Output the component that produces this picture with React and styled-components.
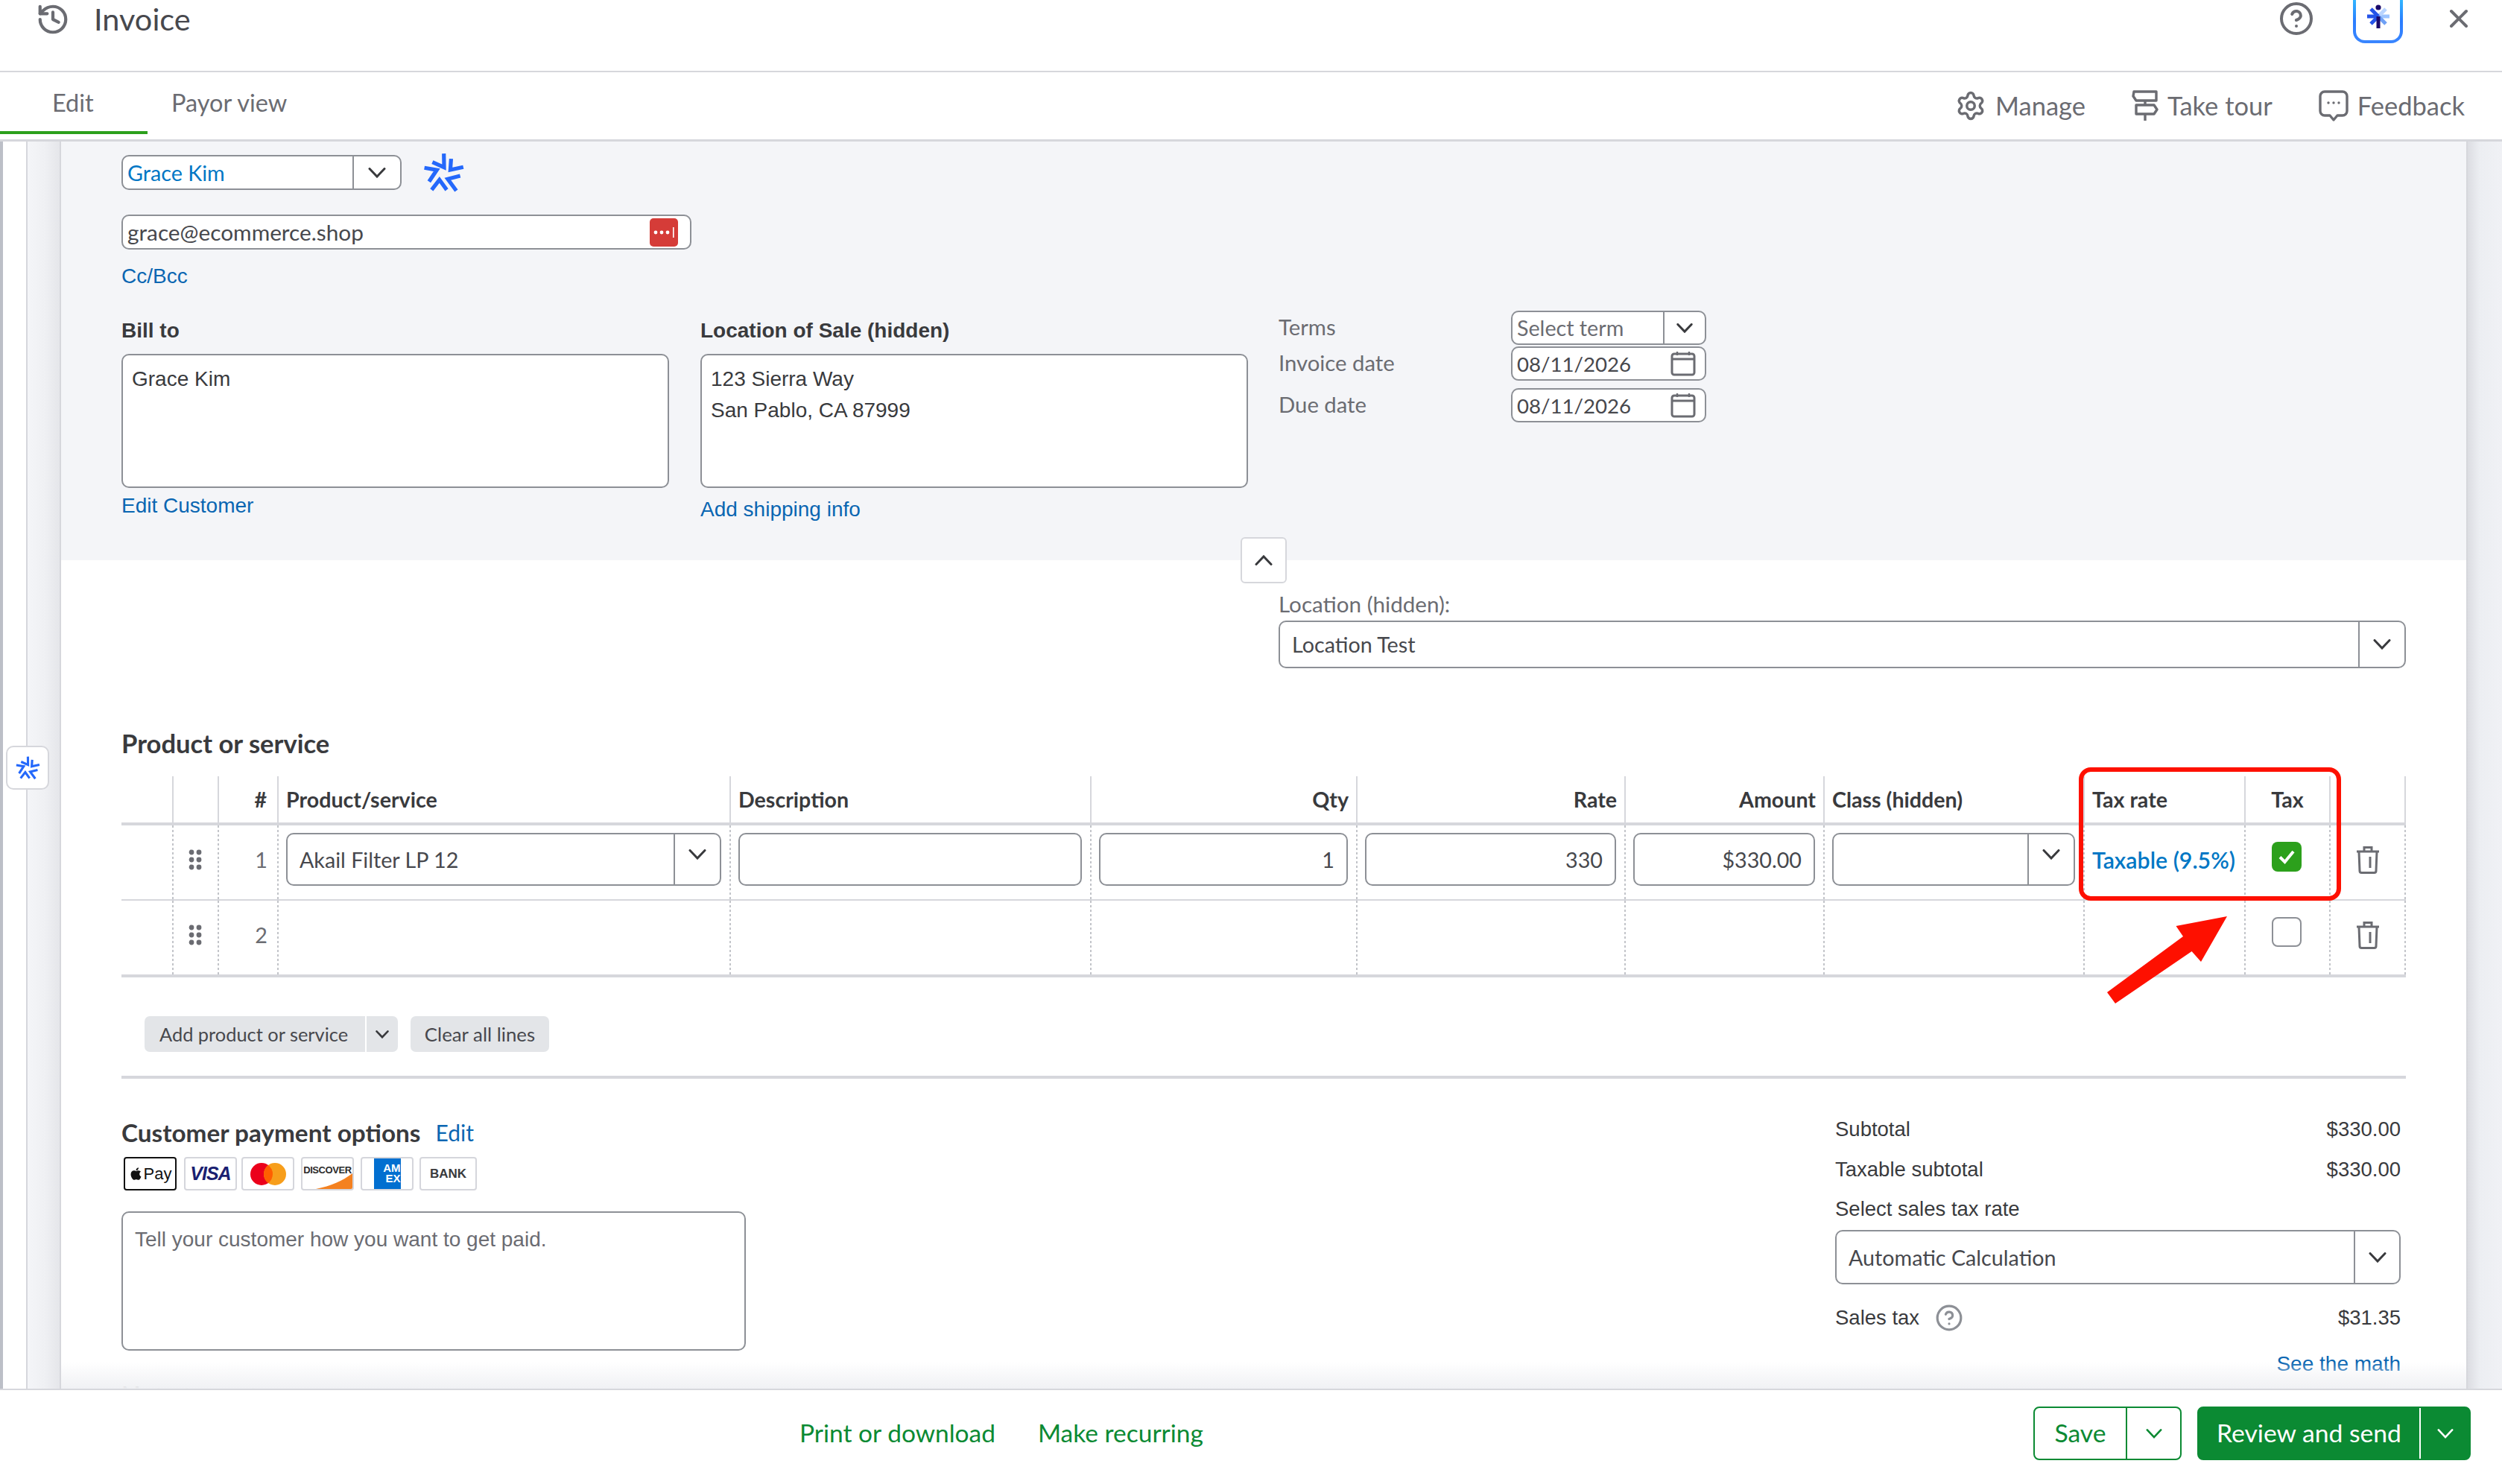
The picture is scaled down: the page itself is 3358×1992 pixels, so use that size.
import React from "react";
import styled, { createGlobalStyle } from "styled-components";
import { FaApple } from "react-icons/fa";
import { History, CircleHelp, X, Settings } from "lucide-react";

const GlobalStyle = createGlobalStyle`
  html, body {
    margin: 0;
    padding: 0;
    background: #fff;
  }
  * {
    box-sizing: border-box;
  }
`;

const LINE = "#d6d7dc";
const BORDER = "#8d9096";
const INK = "#393a3d";
const SOFT = "#47484d";
const MUTED = "#6b6c72";
const LINK = "#0a66b2";
const GREEN = "#0b8a33";
const AVENIR = `Lato, "Noto Sans", sans-serif`;
const ARIAL = `"Liberation Sans", Arial, sans-serif`;
const COLUMNS = "68px 61px 80px 607px 484px 357px 360px 267px 349px 216px 114px 103px";
const DOTS = "repeating-linear-gradient(180deg, #c2c4c9 0 3px, transparent 3px 6px)";

const Page = styled.div`
  width: 3358px;
  height: 1992px;
  display: flex;
  flex-direction: column;
  overflow: hidden;
  font-family: ${AVENIR};
  color: ${INK};
`;

const Header = styled.header`
  height: 97px;
  flex: none;
  display: flex;
  align-items: flex-start;
  border-bottom: 2px solid ${LINE};
  padding: 3px 42px 0 48px;
`;

const HeaderTitle = styled.div`
  font-size: 41.5px;
  line-height: 44px;
  margin-left: 32px;
  color: ${SOFT};
`;

const HeaderIcons = styled.div`
  margin-left: auto;
  display: flex;
  align-items: flex-start;
  padding-top: 2px;
`;

const HelpBtn = styled.div`
  display: flex;
  margin-top: -4px;
  color: ${MUTED};
`;

const AssistBtn = styled.div`
  width: 67px;
  height: 74px;
  margin: -21px 0 0 52px;
  border: 4px solid transparent;
  border-radius: 16px;
  background:
    linear-gradient(#fff, #fff) padding-box,
    linear-gradient(180deg, #35d5ff 0%, #2a7dff 60%, #3a86ff 100%) border-box;
  display: flex;
  align-items: flex-end;
  justify-content: center;
  padding-bottom: 14px;
`;

const CloseBtn = styled.div`
  display: flex;
  margin: 0 -4px 0 55px;
  color: ${MUTED};
`;

const TabBar = styled.nav`
  height: 93px;
  flex: none;
  display: flex;
  align-items: stretch;
  border-bottom: 3px solid ${LINE};
`;

const Tab = styled.div`
  width: ${(p) => p.$w}px;
  font-size: 32.5px;
  line-height: 40px;
  padding: 21px 0 0 ${(p) => p.$pad}px;
  color: ${MUTED};
  height: 83px;
  border-bottom: ${(p) => (p.$active ? `4px solid #2ca01c` : "none")};
`;

const TabActions = styled.div`
  margin-left: auto;
  display: flex;
  padding: 24px 50px 0 0;
  gap: 62px;
`;

const TabAction = styled.div`
  display: flex;
  align-items: flex-start;
  gap: 12px;
  font-size: 34.5px;
  line-height: 42px;
  color: ${MUTED};
`;

const Body = styled.div`
  flex: 1;
  min-height: 0;
  display: flex;
  position: relative;
  overflow: hidden;
`;

const Rail = styled.aside`
  width: 82px;
  flex: none;
  display: flex;
  position: relative;
`;

const RailEdge = styled.div`
  width: 4px;
  background: #bcbfc7;
`;

const RailWhite = styled.div`
  width: 31px;
  background: #fff;
`;

const RailShade = styled.div`
  flex: 1;
  border-left: 2px solid ${LINE};
  border-right: 2px solid ${LINE};
  background: linear-gradient(90deg, #f4f5f8 0%, #eff0f3 55%, #e5e6ea 100%);
`;

const AssistTab = styled.div`
  position: absolute;
  left: 8px;
  top: 811px;
  width: 58px;
  height: 59px;
  background: #fff;
  border: 2px solid ${LINE};
  border-radius: 10px;
  display: flex;
  align-items: center;
  justify-content: center;
`;

const Gutter = styled.div`
  width: 48px;
  flex: none;
  border-left: 2px solid ${LINE};
  background: linear-gradient(90deg, #dcdde2 0%, #eceef2 35%, #f0f1f5 100%);
`;

const Main = styled.main`
  flex: 1;
  min-width: 0;
  display: flex;
  flex-direction: column;
`;

const GraySection = styled.section`
  height: 562px;
  flex: none;
  position: relative;
  background: #f4f5f8;
  padding: 18px 81px 0;
`;

const CollapseBtn = styled.div`
  position: absolute;
  left: 1583px;
  bottom: -31px;
  width: 62px;
  height: 62px;
  background: #fff;
  border: 2px solid ${LINE};
  border-radius: 6px;
  display: flex;
  align-items: center;
  justify-content: center;
`;

const CustomerRow = styled.div`
  display: flex;
  align-items: center;
  height: 47px;
  gap: 9px;
`;

const SparkSvg = styled.svg`
  flex: none;
`;

const Field = styled.div`
  width: ${(p) => (p.$w ? `${p.$w}px` : "100%")};
  height: ${(p) => p.$h}px;
  flex: none;
  display: flex;
  align-items: center;
  background: #fff;
  border: 2px solid ${BORDER};
  border-radius: ${(p) => p.$r || 10}px;
  font-family: ${AVENIR};
  font-size: ${(p) => p.$size || 28.7}px;
  color: ${(p) => p.$color || SOFT};
  margin-top: ${(p) => p.$mt || 0}px;
  padding: 0 ${(p) => p.$padRight || 0}px 0 ${(p) => p.$pad || 0}px;
  justify-content: ${(p) => (p.$right ? "flex-end" : "flex-start")};
`;

const FieldText = styled.div`
  flex: 1;
  white-space: nowrap;
`;

const FieldArrow = styled.div`
  width: ${(p) => p.$w}px;
  height: 100%;
  flex: none;
  border-left: 2px solid ${BORDER};
  display: flex;
  align-items: ${(p) => (p.$top ? "flex-start" : "center")};
  padding-top: ${(p) => (p.$top ? 20 : 0)}px;
  justify-content: center;
`;

const RedBadge = styled.div`
  width: 38px;
  height: 38px;
  margin-right: 16px;
  background: #d53c38;
  border-radius: 5px;
  display: flex;
  align-items: center;
  justify-content: center;
`;

const TextLink = styled.div`
  font-family: ${ARIAL};
  font-size: 28px;
  line-height: 32px;
  color: ${LINK};
  margin-top: ${(p) => p.$mt || 0}px;
`;

const BillingRow = styled.div`
  display: flex;
  margin-top: 30px;
`;

const AddressCol = styled.div`
  width: 735px;
  margin-right: ${(p) => p.$gap}px;
  padding-top: 12px;
`;

const BoldLabel = styled.div`
  font-family: ${ARIAL};
  font-weight: 700;
  font-size: 28px;
  line-height: 30px;
  margin-bottom: 16px;
`;

const AddressBox = styled.div`
  height: 180px;
  background: #fff;
  border: 2px solid ${BORDER};
  border-radius: 10px;
  padding: 11px 12px;
  font-family: ${ARIAL};
  font-size: 28px;
  line-height: 42px;
`;

const TermsGrid = styled.div`
  display: grid;
  grid-template-columns: 312px 262px;
  grid-template-rows: 46px 46px 46px;
  row-gap: 2px;
  align-items: center;
  font-size: 29.3px;
  color: ${MUTED};
  & > span {
    position: relative;
    top: -2px;
  }
  & > :nth-child(n + 5) {
    margin-top: 16px;
  }
`;

const DateIcon = styled.div`
  display: flex;
  margin-left: auto;
  margin-right: 12px;
`;

const FormBody = styled.div`
  padding: 0 81px;
`;

const LocationBlock = styled.div`
  width: 1513px;
  margin: 43px 0 0 1553px;
`;

const LocationLabel = styled.div`
  font-size: 29.6px;
  line-height: 32px;
  margin-bottom: 6px;
  color: ${MUTED};
`;

const SectionTitle = styled.h2`
  margin: ${(p) => p.$mt}px 0 0;
  font-size: ${(p) => p.$size || 34.6}px;
  line-height: 40px;
  font-weight: 700;
  color: ${INK};
`;

const TableWrap = styled.div`
  position: relative;
  margin-top: 24px;
`;

const Row = styled.div`
  display: grid;
  grid-template-columns: ${COLUMNS};
  height: ${(p) => p.$h}px;
  border-bottom: ${(p) => p.$rule}px solid ${LINE};
  box-sizing: content-box;
`;

const HeadCell = styled.div`
  display: flex;
  align-items: center;
  justify-content: ${(p) => p.$align || "flex-start"};
  border-left: ${(p) => (p.$first ? "none" : `2px solid ${LINE}`)};
  border-right: ${(p) => (p.$last ? `2px solid ${LINE}` : "none")};
  padding: 0 ${(p) => p.$padR ?? 10}px 0 10px;
  font-size: 28.6px;
  font-weight: 700;
  white-space: nowrap;
`;

const Cell = styled.div`
  display: flex;
  align-items: ${(p) => (p.$top ? "flex-start" : "center")};
  justify-content: ${(p) => p.$align || "flex-start"};
  background-image: ${(p) => (p.$first ? "none" : p.$last ? `${DOTS}, ${DOTS}` : DOTS)};
  background-size: 2px 100%;
  background-repeat: no-repeat;
  background-position: ${(p) => (p.$last ? "left top, right top" : "left top")};
  padding: ${(p) => (p.$top ? "10px 11px 0 12px" : "0 0 8px")};
  font-size: 28.7px;
  color: ${SOFT};
  white-space: nowrap;
`;

const NumCell = styled(Cell)`
  padding-right: 13px;
  color: ${MUTED};
`;

const TaxableLink = styled.span`
  font-size: 30.3px;
  font-weight: 600;
  color: #0077c5;
  margin-left: 12px;
`;

const CheckBox = styled.div`
  width: 40px;
  height: 40px;
  border-radius: 8px;
  background: ${(p) => (p.$on ? "#2ca01c" : "#fff")};
  border: ${(p) => (p.$on ? "none" : `2px solid ${BORDER}`)};
  display: flex;
  align-items: center;
  justify-content: center;
  margin-bottom: 8px;
`;

const HighlightBox = styled.div`
  position: absolute;
  left: 2627px;
  top: -12px;
  width: 352px;
  height: 179px;
  border: 6px solid #fe1000;
  border-radius: 16px;
  pointer-events: none;
`;

const ArrowMark = styled.svg`
  position: absolute;
  left: 2657px;
  top: 183px;
`;

const LineButtons = styled.div`
  display: flex;
  gap: 17px;
  margin: 52px 0 0 31px;
`;

const GrayBtn = styled.div`
  width: ${(p) => p.$w}px;
  height: 48px;
  display: flex;
  align-items: center;
  justify-content: ${(p) => (p.$center ? "center" : "flex-start")};
  padding-left: ${(p) => (p.$center ? 0 : 20)}px;
  background: #e3e5e8;
  border-radius: 7px;
  font-size: ${(p) => p.$size}px;
  color: ${SOFT};
`;

const GrayDivider = styled.div`
  height: 100%;
  width: 44px;
  margin-left: auto;
  border-left: 2px solid #fff;
  display: flex;
  align-items: center;
  justify-content: center;
`;

const Separator = styled.div`
  height: 4px;
  background: ${LINE};
  margin-top: 32px;
`;

const BottomGrid = styled.div`
  display: flex;
  justify-content: space-between;
  margin-top: 52px;
  padding-right: 7px;
`;

const PaymentCol = styled.div`
  width: 838px;
`;

const PaymentHead = styled.div`
  display: flex;
  gap: 20px;
  align-items: center;
`;

const EditLink = styled.span`
  font-size: 30px;
  color: ${LINK};
`;

const CardRow = styled.div`
  display: flex;
  margin: 13px 0 0 3px;
`;

const Card = styled.div`
  width: ${(p) => p.$w || 71}px;
  height: 45px;
  margin-right: ${(p) => p.$gap}px;
  flex: none;
  position: relative;
  overflow: hidden;
  background: #fff;
  border: 2px solid ${(p) => (p.$dark ? "#111" : "#d5d6dc")};
  border-radius: 4px;
  display: flex;
  align-items: center;
  justify-content: center;
`;

const ApplePay = styled.span`
  font-family: ${ARIAL};
  font-size: 22px;
  color: #111;
  margin-left: 1px;
`;

const VisaMark = styled.span`
  font-family: ${ARIAL};
  font-size: 25px;
  font-weight: 700;
  font-style: italic;
  letter-spacing: -1px;
  color: #1a1f71;
`;

const DiscoverMark = styled.span`
  font-family: ${ARIAL};
  font-size: 13px;
  font-weight: 700;
  letter-spacing: -0.4px;
  color: #2b2b2b;
  position: relative;
  top: -5px;
`;

const DiscoverSwoosh = styled.svg`
  position: absolute;
  left: 0;
  bottom: 0;
`;

const AmexTile = styled.div`
  width: 36px;
  height: 41px;
  background: #016fd0;
  color: #fff;
  font-family: ${ARIAL};
  font-size: 15px;
  font-weight: 700;
  line-height: 14px;
  padding-top: 6px;
  text-align: right;
  white-space: nowrap;
`;

const BankMark = styled.span`
  font-family: ${ARIAL};
  font-size: 17px;
  font-weight: 700;
  color: ${INK};
`;

const NoteBox = styled.div`
  height: 187px;
  margin-top: 28px;
  border: 2px solid ${BORDER};
  border-radius: 10px;
  padding: 20px 16px;
  font-family: ${ARIAL};
  font-size: 28px;
  line-height: 32px;
  color: ${MUTED};
`;

const TotalsCol = styled.div`
  width: 759px;
  font-family: ${ARIAL};
  font-size: 27.5px;
  line-height: 32px;
`;

const TotalRow = styled.div`
  display: flex;
  justify-content: space-between;
  align-items: center;
  height: 32px;
  margin-top: ${(p) => p.$mt || 0}px;
`;

const SalesTaxLabel = styled.span`
  display: flex;
  align-items: center;
  gap: 21px;
`;

const RightLink = styled(TextLink)`
  text-align: right;
`;

const FadeOut = styled.div`
  position: absolute;
  left: 82px;
  right: 48px;
  bottom: 0;
  height: 36px;
  background: linear-gradient(180deg, rgba(240, 241, 244, 0) 0%, #f0f1f4 100%);
  pointer-events: none;
`;

const Footer = styled.footer`
  height: 128px;
  flex: none;
  display: flex;
  align-items: flex-start;
  border-top: 2px solid ${LINE};
  background: #fff;
  padding: 22px 42px 0 1073px;
`;

const FooterLink = styled.div`
  font-size: 33.5px;
  line-height: 40px;
  margin: 15px 57px 0 0;
  color: ${GREEN};
`;

const SplitBtn = styled.div`
  height: 72px;
  width: ${(p) => p.$w}px;
  margin-left: ${(p) => p.$ml};
  display: flex;
  border: 2px solid ${GREEN};
  border-radius: 8px;
  background: ${(p) => (p.$solid ? GREEN : "#fff")};
  color: ${(p) => (p.$solid ? "#fff" : GREEN)};
  font-size: 33.7px;
`;

const SplitLabel = styled.div`
  flex: 1;
  display: flex;
  align-items: center;
  justify-content: center;
  padding-bottom: 2px;
`;

const SplitArrow = styled.div`
  width: ${(p) => p.$w}px;
  flex: none;
  border-left: 2px solid ${(p) => (p.$solid ? "#fff" : GREEN)};
  display: flex;
  align-items: center;
  justify-content: center;
`;

function Chevron({ up, w = 24, color = INK, weight = 3 }) {
  const h = Math.round(w * 0.6);
  return (
    <svg width={w} height={h} viewBox="0 0 24 14" fill="none">
      <path
        d={up ? "M2 12.5 12 2l10 10.5" : "M2 1.5 12 12 22 1.5"}
        stroke={color}
        strokeWidth={(weight * 24) / w}
        strokeLinecap="round"
      />
    </svg>
  );
}

function Spark({ size = 90 }) {
  return (
    <SparkSvg width={size} height={(size * 70) / 90} viewBox="0 0 270 210" fill="none">
      <g stroke="#2468fb" strokeWidth="15" strokeLinejoin="miter">
        <path d="M137 32 138 85 93 65" />
        <path d="M165 52 162 95 212 84" />
        <path d="M200 118 152 130 185 175" />
        <path d="M90 172 120 133 148 172" />
        <path d="M62 87 110 95 80 140" />
      </g>
    </SparkSvg>
  );
}

function AssistMark() {
  return (
    <svg width="32" height="34" viewBox="0 0 32 34" fill="none">
      <circle cx="16" cy="4" r="3.6" fill="#1b0a6b" />
      <path d="M1 16h15" stroke="#2554e8" strokeWidth="5" />
      <path d="M16 16h15" stroke="#9cc4ff" strokeWidth="5" />
      <path d="M26 6 16 16" stroke="#b8d4ff" strokeWidth="5" />
      <path d="M26 26 16 16" stroke="#6fa0f5" strokeWidth="5" />
      <path d="M6 6l10 10" stroke="#2554e8" strokeWidth="5" />
      <path d="M6 26l10-10" stroke="#2554e8" strokeWidth="5" />
      <path d="M16 16v16" stroke="#1b0a6b" strokeWidth="5" />
    </svg>
  );
}

function TourIcon() {
  return (
    <svg width="36" height="42" viewBox="0 0 36 42" fill="none" stroke={MUTED} strokeWidth="3.4" strokeLinejoin="round">
      <path d="M3 2h30v12H6l-4-6z" />
      <path d="M6 20h24l4 6-4 6H6z" />
      <path d="M18 14v6M18 32v9" />
    </svg>
  );
}

function FeedbackIcon() {
  return (
    <svg width="40" height="42" viewBox="0 0 40 42" fill="none">
      <path
        d="M8 2h24a6 6 0 0 1 6 6v20a6 6 0 0 1-6 6h-7l-5 6-5-6H8a6 6 0 0 1-6-6V8a6 6 0 0 1 6-6z"
        stroke={MUTED}
        strokeWidth="3.4"
        strokeLinejoin="round"
      />
      <circle cx="13" cy="17" r="1.7" fill={MUTED} />
      <circle cx="20" cy="17" r="1.7" fill={MUTED} />
      <circle cx="27" cy="17" r="1.7" fill={MUTED} />
    </svg>
  );
}

function CalendarIcon() {
  return (
    <svg width="34" height="34" viewBox="0 0 34 34" fill="none" stroke="#6b6c72" strokeWidth="3">
      <rect x="2" y="4" width="30" height="28" rx="3" />
      <path d="M2 11h30" />
      <path d="M9 1v5M25 1v5" strokeWidth="2.4" />
    </svg>
  );
}

function DragDots() {
  return (
    <svg width="18" height="28" viewBox="0 0 18 28" fill="#6b6c72">
      {[4, 14, 24].map((y) => (
        <g key={y}>
          <circle cx="4" cy={y} r="3.4" />
          <circle cx="14" cy={y} r="3.4" />
        </g>
      ))}
    </svg>
  );
}

function TrashIcon() {
  return (
    <svg width="32" height="38" viewBox="0 0 32 38" fill="none" stroke="#6b6c72" strokeWidth="3">
      <path d="M1 8h30" />
      <path d="M11 8V2.5h10V8" />
      <path d="M4 8l1 26a2.5 2.5 0 0 0 2.5 2.5h17A2.5 2.5 0 0 0 27 34l1-26" />
      <path d="M19 15v15" />
    </svg>
  );
}

function CheckMark() {
  return (
    <svg width="24" height="20" viewBox="0 0 24 20" fill="none">
      <path d="M3 10.5 9.5 17 21 3" stroke="#fff" strokeWidth="4" />
    </svg>
  );
}

function BadgeDots() {
  return (
    <svg width="30" height="14" viewBox="0 0 30 14" fill="#fff">
      <circle cx="4" cy="7" r="2.4" />
      <circle cx="12" cy="7" r="2.4" />
      <circle cx="20" cy="7" r="2.4" />
      <rect x="27" y="0" width="1.6" height="14" />
    </svg>
  );
}

function Logos() {
  return (
    <CardRow>
      <Card $dark $gap={10}>
        <FaApple size={19} color="#111" />
        <ApplePay>Pay</ApplePay>
      </Card>
      <Card $gap={6}>
        <VisaMark>VISA</VisaMark>
      </Card>
      <Card $gap={9}>
        <svg width="48" height="30" viewBox="0 0 48 30">
          <circle cx="15" cy="15" r="15" fill="#eb001b" />
          <circle cx="33" cy="15" r="15" fill="#f79e1b" />
          <path d="M24 3a15 15 0 0 1 0 24 15 15 0 0 1 0-24z" fill="#ff5f00" />
        </svg>
      </Card>
      <Card $gap={9}>
        <DiscoverMark>DISCOVER</DiscoverMark>
        <DiscoverSwoosh width="67" height="41" viewBox="0 0 67 41">
          <path d="M18 41C38 37 54 30 67 20v21z" fill="#f48120" />
        </DiscoverSwoosh>
      </Card>
      <Card $gap={8}>
        <AmexTile>
          AM
          <br />
          EX
        </AmexTile>
      </Card>
      <Card $w={77} $gap={0}>
        <BankMark>BANK</BankMark>
      </Card>
    </CardRow>
  );
}

function Select({ value, w, h, arrowW, pad, color, size, mt, chevron = 24, top }) {
  return (
    <Field $w={w} $h={h} $pad={pad} $color={color} $size={size} $mt={mt}>
      <FieldText>{value}</FieldText>
      <FieldArrow $w={arrowW} $top={top}>
        <Chevron w={chevron} />
      </FieldArrow>
    </Field>
  );
}

export default function App() {
  return (
    <Page>
      <GlobalStyle />
      <Header>
        <History size={46} color={MUTED} strokeWidth={2.2} />
        <HeaderTitle>Invoice</HeaderTitle>
        <HeaderIcons>
          <HelpBtn>
            <CircleHelp size={48} strokeWidth={2} />
          </HelpBtn>
          <AssistBtn>
            <AssistMark />
          </AssistBtn>
          <CloseBtn>
            <X size={40} strokeWidth={2.4} />
          </CloseBtn>
        </HeaderIcons>
      </Header>

      <TabBar>
        <Tab $active $w={198} $pad={70}>
          Edit
        </Tab>
        <Tab $w={300} $pad={32}>
          Payor view
        </Tab>
        <TabActions>
          <TabAction>
            <Settings size={42} strokeWidth={2} />
            Manage
          </TabAction>
          <TabAction>
            <TourIcon />
            Take tour
          </TabAction>
          <TabAction>
            <FeedbackIcon />
            Feedback
          </TabAction>
        </TabActions>
      </TabBar>

      <Body>
        <Rail>
          <RailEdge />
          <RailWhite />
          <RailShade />
          <AssistTab>
            <Spark size={56} />
          </AssistTab>
        </Rail>

        <Main>
          <GraySection>
            <CustomerRow>
              <Select value="Grace Kim" w={376} h={47} arrowW={64} pad={6} color="#0077c5" />
              <Spark size={94} />
            </CustomerRow>
            <Field $w={765} $h={47} $mt={33} $pad={6} $size={29.8}>
              <FieldText>grace@ecommerce.shop</FieldText>
              <RedBadge>
                <BadgeDots />
              </RedBadge>
            </Field>
            <TextLink $mt={20}>Cc/Bcc</TextLink>

            <BillingRow>
              <AddressCol $gap={42}>
                <BoldLabel>Bill to</BoldLabel>
                <AddressBox>Grace Kim</AddressBox>
                <TextLink $mt={8}>Edit Customer</TextLink>
              </AddressCol>
              <AddressCol $gap={41}>
                <BoldLabel>Location of Sale (hidden)</BoldLabel>
                <AddressBox>
                  123 Sierra Way
                  <br />
                  San Pablo, CA 87999
                </AddressBox>
                <TextLink $mt={13}>Add shipping info</TextLink>
              </AddressCol>
              <TermsGrid>
                <span>Terms</span>
                <Select value="Select term" w={262} h={46} arrowW={56} pad={6} color={MUTED} chevron={22} />
                <span>Invoice date</span>
                <Field $w={262} $h={46} $pad={6} $size={27.6}>
                  <FieldText>08/11/2026</FieldText>
                  <DateIcon>
                    <CalendarIcon />
                  </DateIcon>
                </Field>
                <span>Due date</span>
                <Field $w={262} $h={46} $pad={6} $size={27.6}>
                  <FieldText>08/11/2026</FieldText>
                  <DateIcon>
                    <CalendarIcon />
                  </DateIcon>
                </Field>
              </TermsGrid>
            </BillingRow>
            <CollapseBtn>
              <Chevron up w={24} />
            </CollapseBtn>
          </GraySection>

          <FormBody>
            <LocationBlock>
              <LocationLabel>Location (hidden):</LocationLabel>
              <Select value="Location Test" h={64} arrowW={62} pad={16} />
            </LocationBlock>

            <SectionTitle $mt={81}>Product or service</SectionTitle>

            <TableWrap>
              <Row $h={62} $rule={4}>
                <HeadCell $first />
                <HeadCell />
                <HeadCell $align="flex-end" $padR={14}>
                  #
                </HeadCell>
                <HeadCell>Product/service</HeadCell>
                <HeadCell>Description</HeadCell>
                <HeadCell $align="flex-end">Qty</HeadCell>
                <HeadCell $align="flex-end">Rate</HeadCell>
                <HeadCell $align="flex-end">Amount</HeadCell>
                <HeadCell>Class (hidden)</HeadCell>
                <HeadCell>Tax rate</HeadCell>
                <HeadCell $align="center">Tax</HeadCell>
                <HeadCell $last />
              </Row>

              <Row $h={99} $rule={2}>
                <Cell $first />
                <Cell $align="center">
                  <DragDots />
                </Cell>
                <NumCell $align="flex-end">1</NumCell>
                <Cell $top>
                  <Select value="Akail Filter LP 12" h={71} arrowW={62} pad={16} top />
                </Cell>
                <Cell $top>
                  <Field $h={71} />
                </Cell>
                <Cell $top>
                  <Field $h={71} $right $padRight={16}>
                    1
                  </Field>
                </Cell>
                <Cell $top>
                  <Field $h={71} $right $padRight={16}>
                    330
                  </Field>
                </Cell>
                <Cell $top>
                  <Field $h={71} $right $padRight={16}>
                    $330.00
                  </Field>
                </Cell>
                <Cell $top>
                  <Select value="" h={71} arrowW={62} top />
                </Cell>
                <Cell>
                  <TaxableLink>Taxable (9.5%)</TaxableLink>
                </Cell>
                <Cell $align="center">
                  <CheckBox $on>
                    <CheckMark />
                  </CheckBox>
                </Cell>
                <Cell $align="center" $last>
                  <TrashIcon />
                </Cell>
              </Row>

              <Row $h={99} $rule={4}>
                <Cell $first />
                <Cell $align="center">
                  <DragDots />
                </Cell>
                <NumCell $align="flex-end">2</NumCell>
                <Cell />
                <Cell />
                <Cell />
                <Cell />
                <Cell />
                <Cell />
                <Cell />
                <Cell $align="center">
                  <CheckBox />
                </Cell>
                <Cell $align="center" $last>
                  <TrashIcon />
                </Cell>
              </Row>

              <HighlightBox />
              <ArrowMark width="170" height="125" viewBox="0 0 170 125">
                <path d="M169 5 100.5 18 110 32 8 107 19 122 121.6 52 134 66z" fill="#fe1000" />
              </ArrowMark>
            </TableWrap>

            <LineButtons>
              <GrayBtn $w={340} $size={25.4}>
                Add product or service
                <GrayDivider>
                  <Chevron w={18} weight={2.6} />
                </GrayDivider>
              </GrayBtn>
              <GrayBtn $w={186} $size={25.8} $center>
                Clear all lines
              </GrayBtn>
            </LineButtons>
            <Separator />

            <BottomGrid>
              <PaymentCol>
                <PaymentHead>
                  <SectionTitle $mt={0} $size={33.3}>
                    Customer payment options
                  </SectionTitle>
                  <EditLink>Edit</EditLink>
                </PaymentHead>
                <Logos />
                <NoteBox>Tell your customer how you want to get paid.</NoteBox>
                <SectionTitle $mt={39} $size={33.3}>
                  Note to customer
                </SectionTitle>
              </PaymentCol>

              <TotalsCol>
                <TotalRow>
                  <span>Subtotal</span>
                  <span>$330.00</span>
                </TotalRow>
                <TotalRow $mt={22}>
                  <span>Taxable subtotal</span>
                  <span>$330.00</span>
                </TotalRow>
                <TotalRow $mt={21}>
                  <span>Select sales tax rate</span>
                </TotalRow>
                <Select value="Automatic Calculation" h={73} arrowW={61} pad={16} mt={12} />
                <TotalRow $mt={29}>
                  <SalesTaxLabel>
                    Sales tax
                    <CircleHelp size={38} color="#8d9096" strokeWidth={2} />
                  </SalesTaxLabel>
                  <span>$31.35</span>
                </TotalRow>
                <RightLink $mt={30}>See the math</RightLink>
              </TotalsCol>
            </BottomGrid>
          </FormBody>
        </Main>

        <Gutter />
        <FadeOut />
      </Body>

      <Footer>
        <FooterLink>Print or download</FooterLink>
        <FooterLink>Make recurring</FooterLink>
        <SplitBtn $w={199} $ml="auto">
          <SplitLabel>Save</SplitLabel>
          <SplitArrow $w={73}>
            <Chevron w={22} color={GREEN} weight={2.6} />
          </SplitArrow>
        </SplitBtn>
        <SplitBtn $w={367} $ml="21px" $solid>
          <SplitLabel>Review and send</SplitLabel>
          <SplitArrow $w={67} $solid>
            <Chevron w={22} color="#fff" weight={2.6} />
          </SplitArrow>
        </SplitBtn>
      </Footer>
    </Page>
  );
}
